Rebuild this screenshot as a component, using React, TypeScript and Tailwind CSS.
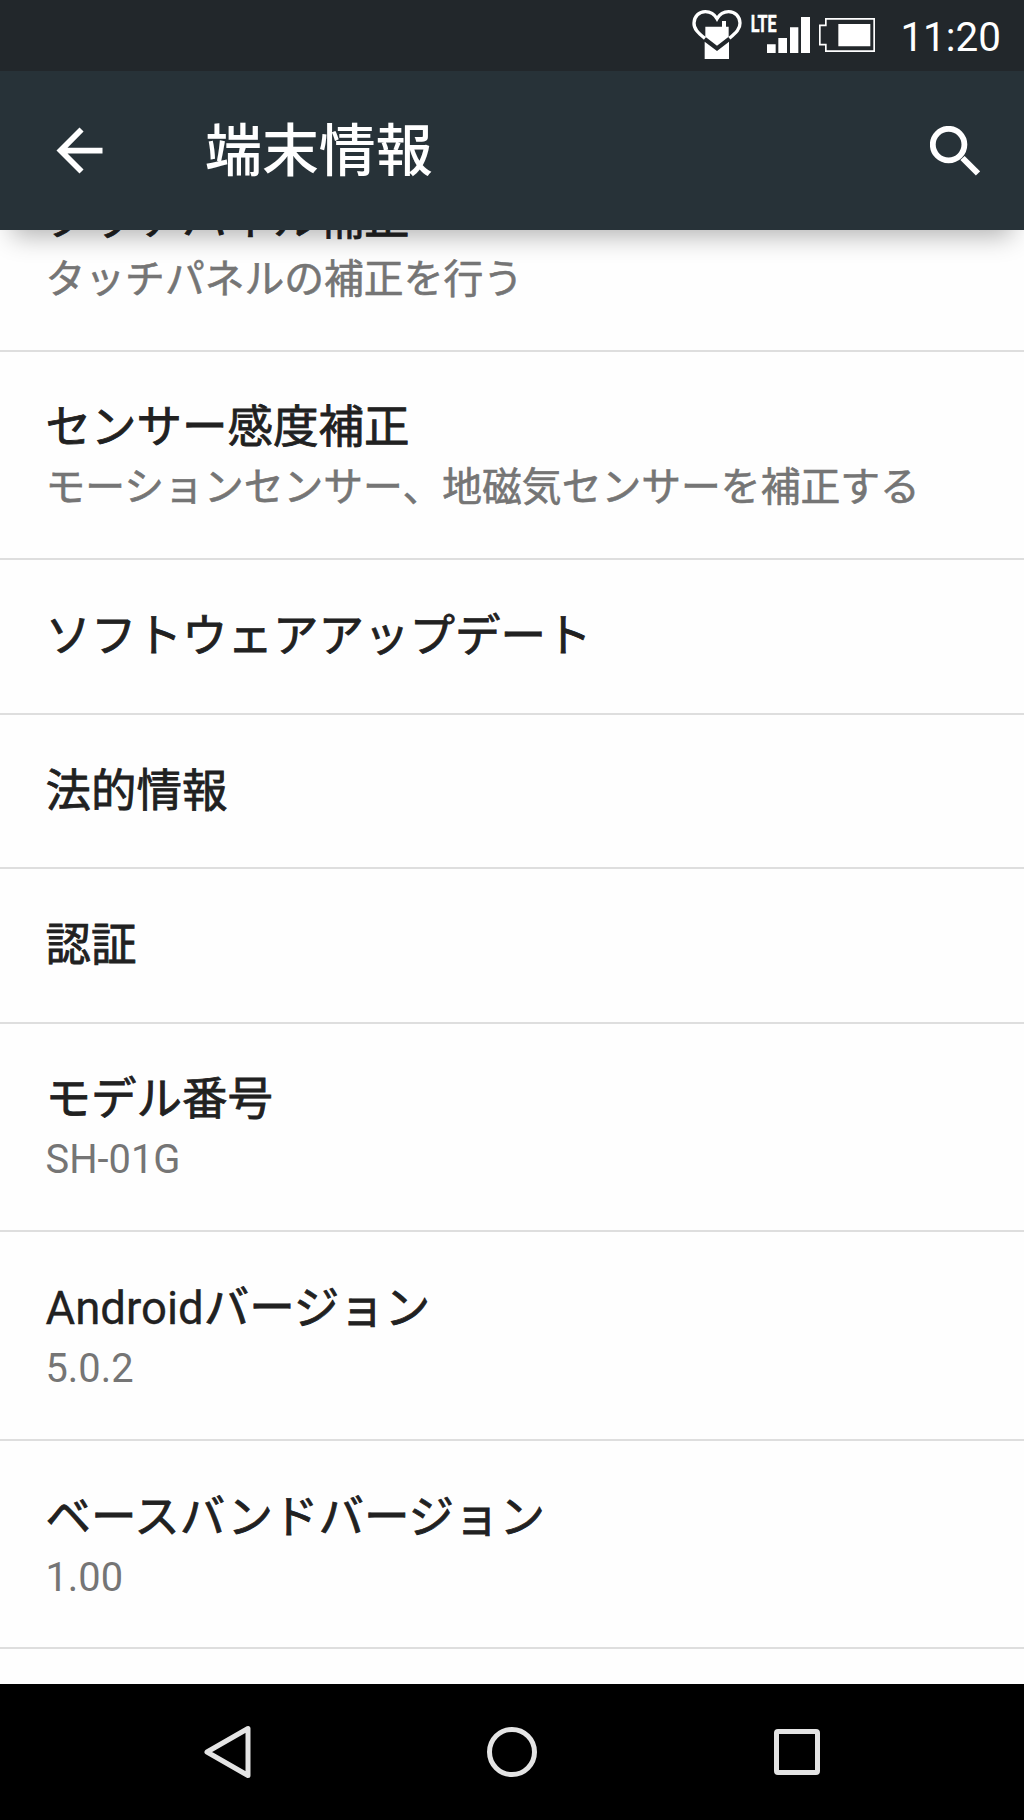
interface SettingItem {
  title: string
  summary?: string
}

const items: SettingItem[] = [
  { title: 'タッチパネル補正', summary: 'タッチパネルの補正を行う' },
  { title: 'センサー感度補正', summary: 'モーションセンサー、地磁気センサーを補正する' },
  { title: 'ソフトウェアアップデート' },
  { title: '法的情報' },
  { title: '認証' },
  { title: 'モデル番号', summary: 'SH-01G' },
  { title: 'Androidバージョン', summary: '5.0.2' },
  { title: 'ベースバンドバージョン', summary: '1.00' },
]

const HeartIcon = () => (
  <svg viewBox="37 27 150 150" className="h-[50px] w-[50px]" fill="white">
    <path
      d="M76 115C55 98 42 86 43 69C44 48 58 35 77 35C94 35 105 44 112 56C119 44 130 35 147 35C166 35 180 48 181 69C182 86 169 98 149 115"
      fill="none"
      stroke="white"
      strokeWidth="10"
    />
    <path d="M77 80H127V63H139V80H147V110L112 137L77 110Z" />
    <path d="M75 125L112 153L148 125V177H75Z" />
  </svg>
)

const SignalIcon = () => (
  <svg viewBox="213 42 177 117" className="h-[39px] w-[59px] overflow-visible" fill="white">
    <text
      x="212"
      y="95"
      textLength="78"
      lengthAdjust="spacingAndGlyphs"
      fontFamily="Roboto, sans-serif"
      fontSize="74"
      fontWeight="700"
      stroke="white"
      strokeWidth="1.500"
    >
      LTE
    </text>
    <path d="M261 133H287V159H261ZM295 114H321V159H295ZM330 82H355V159H330ZM363 51H390V159H363Z" />
  </svg>
)

const BatteryIcon = () => (
  <svg viewBox="416 54 168 102" className="h-[34px] w-[56px]">
    <path
      d="M436.500 56.500H581.500V153.500H436.500V134H418.500V76H436.500Z"
      fill="none"
      stroke="white"
      strokeWidth="5"
    />
    <path d="M474 72H570V139H474Z" fill="white" />
  </svg>
)

const StatusBar = () => (
  <div className="flex h-[71px] items-start justify-end bg-[#22272b] pr-[23px] text-white">
    <div className="mt-[9px] mr-[9px]">
      <HeartIcon />
    </div>
    <div className="mt-[14px] mr-[9px]">
      <SignalIcon />
    </div>
    <div className="mt-[18px] mr-[25px]">
      <BatteryIcon />
    </div>
    <span className="mt-[2px] text-[40.400px] leading-[71px]">11:20</span>
  </div>
)

const AppBar = () => (
  <header className="relative z-10 flex h-[159px] items-center bg-[#273238] pl-[45px] pr-[44px] text-white shadow-[0_18px_24px_-12px_rgba(0,0,0,0.3)]">
    <button type="button" aria-label="戻る">
      <svg viewBox="0 0 24 24" className="h-[69px] w-[69px]" fill="currentColor">
        <path d="M20 11H7.830l5.590-5.590L12 4l-8 8 8 8 1.410-1.410L7.830 13H20v-2z" />
      </svg>
    </button>
    <h1 className="ml-[91px] flex-1 pt-[2px] text-[56.900px] leading-[66px] font-medium">端末情報</h1>
    <button type="button" aria-label="検索">
      <svg viewBox="0 0 50 50" className="h-[50px] w-[50px]" fill="none" stroke="currentColor">
        <circle cx="18.600" cy="18.600" r="15.800" strokeWidth="5.800" />
        <path d="M32.500 32L48 47.500" strokeWidth="6" />
      </svg>
    </button>
  </header>
)

// Japanese glyphs are drawn a little heavier than the Latin ones beside them
const MixedText = ({ text, strokeClass }: { text: string; strokeClass: string }) => {
  const [, latin, japanese] = text.match(/^([\x20-\x7e]*)(.*)$/) ?? ['', '', text]

  return (
    <>
      {latin}
      {japanese && <span className={strokeClass}>{japanese}</span>}
    </>
  )
}

const SettingRow = ({ title, summary }: SettingItem) => (
  <li
    className={`flex flex-col justify-center border-b-2 border-[#dedede] pl-[45.500px] ${
      summary ? 'h-[208.600px] pt-px' : 'h-[154.500px] pt-[2px]'
    }`}
  >
    <p className="text-[45.500px] leading-[66px] text-[#212121] [-webkit-text-stroke:0.3px_#212121]">
      <MixedText text={title} strokeClass="[-webkit-text-stroke:0.8px_#212121]" />
    </p>
    {summary && (
      <p className="text-[39.800px] leading-[54px] text-[#757575]">
        <MixedText text={summary} strokeClass="[-webkit-text-stroke:0.6px_#757575]" />
      </p>
    )}
  </li>
)

const NavBar = () => (
  <nav className="flex h-[136px] items-center justify-center bg-black">
    <button type="button" aria-label="戻る" className="flex w-[284.500px] justify-center pr-[2px]">
      <svg viewBox="0 0 48 54" className="h-[54px] w-[48px]" fill="none" stroke="#e4e4e4" strokeWidth="5">
        <path d="M45 3.500V50.500L4 27Z" strokeLinejoin="round" />
      </svg>
    </button>
    <button type="button" aria-label="ホーム" className="flex w-[284.500px] justify-center">
      <span className="h-[50px] w-[50px] rounded-full border-[5px] border-[#e4e4e4]" />
    </button>
    <button type="button" aria-label="履歴" className="flex w-[284.500px] justify-center">
      <span className="h-[46px] w-[46px] rounded-[4px] border-[5px] border-[#e4e4e4]" />
    </button>
  </nav>
)

export default function App() {
  return (
    <div className="flex h-[1820px] w-[1024px] flex-col overflow-hidden bg-white font-[Roboto,'Noto_Sans_CJK_JP',sans-serif]">
      <StatusBar />
      <AppBar />
      <main className="flex-1 overflow-hidden bg-[#fefefe]">
        {/* list is scrolled so the first title sits partly under the app bar */}
        <ul className="-mt-[87px]">
          {items.map((item) => (
            <SettingRow key={item.title} title={item.title} summary={item.summary} />
          ))}
        </ul>
      </main>
      <NavBar />
    </div>
  )
}
